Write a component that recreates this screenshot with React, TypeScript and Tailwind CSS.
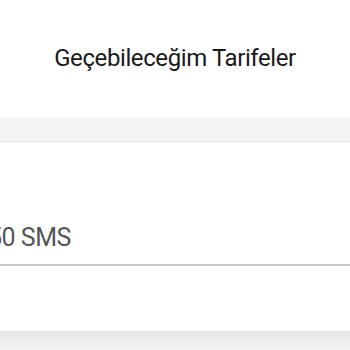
import React from 'react'

export default function App() {
  return (
    <div className="w-[350px] h-[350px] overflow-hidden bg-white flex flex-col" style={{ fontFamily: 'Roboto, "Noto Sans", sans-serif' }}>
      {/* Header */}
      <header className="h-[118px] flex items-center justify-center pb-[2px]">
        <h1 className="text-[24px] text-[#1a1a1a] tracking-[-0.4px]">Geçebileceğim Tarifeler</h1>
      </header>

      {/* Grey divider band */}
      <div className="h-[24px] bg-[#f4f4f4] border-b border-[#ebebeb]" />

      {/* Tariff card */}
      <section className="h-[189px] bg-white flex flex-col overflow-hidden">
        <div className="h-[122px] flex items-end overflow-hidden">
          <div className="-ml-[12px] pb-[14px] text-[25px] leading-none text-[#555] whitespace-nowrap tracking-[-0.5px]">
            50 SMS
          </div>
        </div>
        <div className="h-[2px] bg-[#cacaca]" />
      </section>

      {/* Bottom band */}
      <div className="flex-1 bg-gradient-to-b from-[#e6e6e6] to-[#f4f4f4]" />
    </div>
  )
}
